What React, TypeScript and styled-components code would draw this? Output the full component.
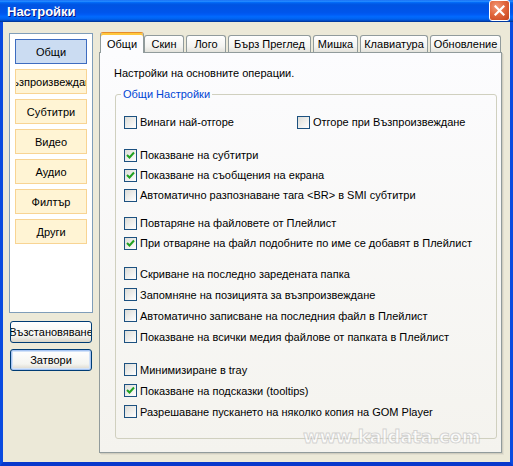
import React from 'react'
import styled, { createGlobalStyle } from 'styled-components'

type OptionItem = { label: string, checked?: boolean }
type OptionGroupType = { top: number, row: number, items: OptionItem[][] }

const sections = ['Общи', 'Възпроизвеждане', 'Субтитри', 'Видео', 'Аудио', 'Филтър', 'Други']

const tabs = [
  { label: 'Общи', w: 44 },
  { label: 'Скин', w: 40 },
  { label: 'Лого', w: 40 },
  { label: 'Бърз Преглед', w: 83 },
  { label: 'Мишка', w: 45 },
  { label: 'Клавиатура', w: 68 },
  { label: 'Обновление', w: 71 },
]

const groups: OptionGroupType[] = [
  { top: 11, row: 20, items: [[{ label: 'Винаги най-отгоре' }, { label: 'Отгоре при Възпроизвеждане' }]] },
  {
    top: 13, row: 20, items: [
      [{ label: 'Показване на субтитри', checked: true }],
      [{ label: 'Показване на съобщения на екрана', checked: true }],
      [{ label: 'Автоматично разпознаване тага <BR> в SMI субтитри' }],
    ]
  },
  {
    top: 8, row: 20, items: [
      [{ label: 'Повтаряне на файловете от Плейлист' }],
      [{ label: 'При отваряне на файл подобните по име се добавят в Плейлист', checked: true }],
    ]
  },
  {
    top: 10, row: 21, items: [
      [{ label: 'Скриване на последно заредената папка' }],
      [{ label: 'Запомняне на позицията за възпроизвеждане' }],
      [{ label: 'Автоматично записване на последния файл в Плейлист' }],
      [{ label: 'Показване на всички медия файлове от папката в Плейлист' }],
    ]
  },
  {
    top: 12, row: 21, items: [
      [{ label: 'Минимизиране в tray' }],
      [{ label: 'Показване на подсказки (tooltips)', checked: true }],
      [{ label: 'Разрешаване пускането на няколко копия на GOM Player' }],
    ]
  },
]

const CheckMark = () => (
  <svg width="11" height="11" viewBox="0 0 11 11">
    <polyline points="2,5 4.5,7.5 9,2.5" fill="none" stroke="#21A121" strokeWidth="2" />
  </svg>
)

const CloseGlyph = () => (
  <svg width="11" height="11" viewBox="0 0 11 11">
    <path d="M1.5 1.5 L9.5 9.5 M9.5 1.5 L1.5 9.5" stroke="#fff" strokeWidth="2.2" strokeLinecap="square" />
  </svg>
)

const Option: React.FC<OptionItem & { width?: number }> = ({ label, checked, width }) => (
  <OptionLabel $width={width}>
    <Box>{checked && <CheckMark />}</Box>
    {label}
  </OptionLabel>
)

const App = () => {
  return (
    <>
      <GlobalStyle />
      <Window>
        <TitleBar>
          <Title>Настройки</Title>
          <CloseButton><CloseGlyph /></CloseButton>
        </TitleBar>
        <Body>
          <LeftCol>
            <SideList>
              {sections.map((s, i) => (
                <SideItem key={s} $active={i === 0}><span>{s}</span></SideItem>
              ))}
            </SideList>
            <Actions>
              <ActionButton><span>Възстановяване</span></ActionButton>
              <ActionButton $default><span>Затвори</span></ActionButton>
            </Actions>
          </LeftCol>
          <RightCol>
            <TabStrip>
              {tabs.map((t, i) => (
                <Tab key={t.label} $w={t.w} $active={i === 0}>{t.label}</Tab>
              ))}
            </TabStrip>
            <Panel>
              <Intro>Настройки на основните операции.</Intro>
              <Group>
                <Legend>Общи Настройки</Legend>
                <Options>
                  {groups.map((g, gi) => (
                    <OptionGroup key={gi} $top={g.top}>
                      {g.items.map((row, ri) => (
                        <OptionRow key={ri} $h={g.row}>
                          {row.map((o, oi) => (
                            <Option key={o.label} {...o} width={row.length > 1 && oi === 0 ? 173 : undefined} />
                          ))}
                        </OptionRow>
                      ))}
                    </OptionGroup>
                  ))}
                </Options>
              </Group>
            </Panel>
          </RightCol>
        </Body>
        <Watermark>www.kaldata.com</Watermark>
      </Window>
    </>
  )
}

const GlobalStyle = createGlobalStyle`
html, body {
  margin:0;
  padding:0;
  background:#ECE9D8;
}
body {
  font-family: "Liberation Sans", Arial, sans-serif;
  font-size:11px;
  color:#000;
}
`
const Window = styled.div`
position:relative;
width:513px;
height:466px;
display:flex;
flex-direction:column;
overflow:hidden;
`
const TitleBar = styled.div`
height:22px;
flex-shrink:0;
display:flex;
align-items:center;
justify-content:space-between;
padding:0 3px 0 7px;
background: linear-gradient(to bottom, #0058ee 0%, #3593ff 4%, #288eff 6%, #127dff 8%, #036ffc 10%, #0262ee 14%, #0057e5 20%, #0054e3 24%, #0055eb 56%, #005bf5 66%, #026afe 76%, #0062ef 86%, #0052d6 92%, #0040ab 96%, #003092 100%);
`
const Title = styled.div`
font-family: "Liberation Sans", Arial, sans-serif;
font-weight:bold;
font-size:13px;
color:#fff;
text-shadow:1px 1px 0 #0A1883;
`
const CloseButton = styled.div`
align-self:flex-start;
width:21px;
height:21px;
box-sizing:border-box;
border:1px solid #fff;
border-radius:3px;
display:flex;
align-items:center;
justify-content:center;
background: radial-gradient(circle at 35% 30%, #F29A7A 0%, #E2683F 45%, #C4401A 100%);
`
const Body = styled.div`
flex:1;
display:flex;
gap:6px;
padding:10px 8px 9px 6px;
background:#ECE9D8;
border-style:solid;
border-width:0 3px 4px 3px;
border-color:#0A4BE0 #0A4BE0 #0838CC #0A4BE0;
`
const LeftCol = styled.div`
width:84px;
flex-shrink:0;
margin-top:1px;
display:flex;
flex-direction:column;
`
const SideList = styled.div`
height:280px;
box-sizing:border-box;
border:1px solid #7F9DB9;
background:#fff;
padding:5px;
display:flex;
flex-direction:column;
gap:5px;
`
const SideItem = styled.div<{ $active?: boolean }>`
height:25px;
box-sizing:border-box;
display:flex;
align-items:center;
justify-content:center;
overflow:hidden;
white-space:nowrap;
border:1px solid ${p => p.$active ? '#3D6CC0' : '#F8D493'};
background:${p => p.$active ? '#CBDCF2' : '#FFF4D4'};
`
const Actions = styled.div`
margin-top:8px;
display:flex;
flex-direction:column;
gap:6px;
`
const ActionButton = styled.button<{ $default?: boolean }>`
height:22px;
margin:0 1px;
padding:0;
box-sizing:border-box;
border:1px solid #003C74;
border-radius:3px;
font-family:inherit;
font-size:11px;
color:#000;
display:flex;
align-items:center;
justify-content:center;
overflow:hidden;
white-space:nowrap;
background:linear-gradient(#FFFFFF, #F4F4F0 70%, #D8D4C8);
box-shadow:${p => p.$default ? 'inset 0 0 0 1px #A6C4F2, inset 0 0 0 2px #D2E2F8' : 'none'};
`
const RightCol = styled.div`
width:403px;
flex-shrink:0;
display:flex;
flex-direction:column;
`
const TabStrip = styled.div`
height:21px;
display:flex;
align-items:flex-end;
gap:2px;
padding-left:1px;
margin-bottom:-1px;
position:relative;
z-index:1;
`
const Tab = styled.div<{ $active?: boolean, $w: number }>`
width:${p => p.$w}px;
box-sizing:border-box;
display:flex;
align-items:center;
justify-content:center;
white-space:nowrap;
border:1px solid #919B9C;
border-bottom:none;
border-radius:3px 3px 0 0;
height:${p => p.$active ? 21 : 17}px;
margin-bottom:${p => p.$active ? 0 : 1}px;
margin-right:${p => p.$active ? -2 : 0}px;
padding-top:${p => p.$active ? 1 : 0}px;
background:${p => p.$active ? '#FCFCFE' : 'linear-gradient(#FFFFFF, #F4F4F1 65%, #E3E2DB)'};
border-top-color:${p => p.$active ? '#E68B2C' : '#919B9C'};
box-shadow:${p => p.$active ? 'inset 0 2px 0 #FFC73C' : 'none'};
`
const Panel = styled.div`
flex:1;
display:flex;
flex-direction:column;
border:1px solid #919B9C;
background:linear-gradient(#FCFCFE, #F4F3EE);
box-shadow:1px 1px 0 #D0CDBF, 2px 2px 0 #E2DFD0;
padding:13px 4px 13px 14px;
`
const Intro = styled.div`
line-height:14px;
`
const Group = styled.fieldset`
flex:1;
min-width:0;
margin:7px 0 0 1px;
padding:0;
border:1px solid #D0D0BF;
border-radius:3px;
`
const Legend = styled.legend`
margin-left:5px;
padding:0 2px;
line-height:14px;
color:#0046D5;
`
const Options = styled.div`
padding:11px 0 0 8px;
`
const OptionGroup = styled.div<{ $top: number }>`
margin-top:${p => p.$top}px;
&:first-child {
  margin-top:0;
}
`
const OptionRow = styled.div<{ $h: number }>`
height:${p => p.$h}px;
display:flex;
align-items:center;
`
const OptionLabel = styled.label<{ $width?: number }>`
display:flex;
align-items:center;
white-space:nowrap;
${p => p.$width ? `width:${p.$width}px;` : ''}
`
const Box = styled.span`
width:13px;
height:13px;
box-sizing:border-box;
margin-right:3px;
border:1px solid #1C5180;
background:linear-gradient(135deg, #DCDCD7, #FFFFFF);
display:flex;
align-items:center;
justify-content:center;
flex-shrink:0;
`
const Watermark = styled.div`
position:absolute;
left:303px;
top:426px;
font-family:"DejaVu Sans", Verdana, sans-serif;
font-weight:bold;
font-size:18px;
letter-spacing:-0.2px;
color:rgba(255,255,255,0.75);
-webkit-text-stroke:1px rgba(175,175,175,0.5);
pointer-events:none;
`

export default App
